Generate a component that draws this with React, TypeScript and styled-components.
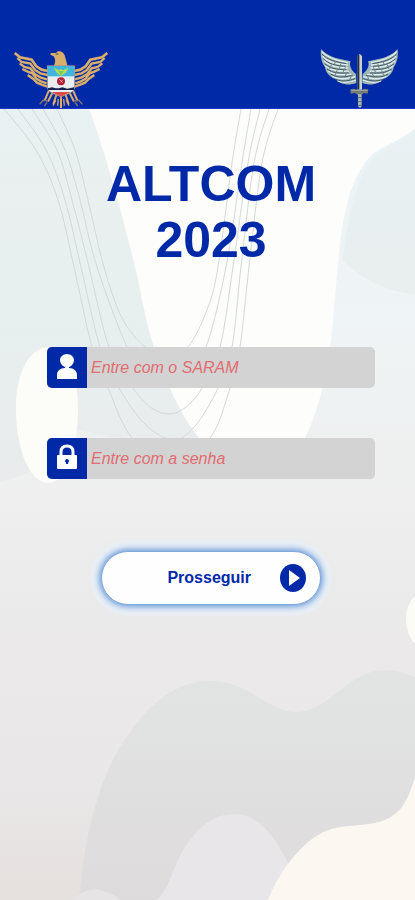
import React from "react";
import styled, { createGlobalStyle } from "styled-components";

const NAVY = "#0029a8";

const GlobalStyle = createGlobalStyle`
  *, *::before, *::after { box-sizing: border-box; }
  body {
    margin: 0;
    font-family: "Liberation Sans", Arial, sans-serif;
    background: #e8e4e3;
  }
`;

const Screen = styled.div`
  position: relative;
  isolation: isolate;
  display: flex;
  flex-direction: column;
  min-height: 100vh;
  overflow: hidden;
`;

const Backdrop = styled.svg`
  position: absolute;
  inset: 0;
  z-index: -1;
  width: 100%;
  height: 100%;
`;

const Header = styled.header`
  display: flex;
  justify-content: space-between;
  align-items: flex-end;
  padding: 48px 15px 0 13px;
  background: ${NAVY};
  border-bottom: 1px solid #1b35c4;
`;

const Emblem = styled.svg<{ $width: number; $height: number }>`
  display: block;
  width: ${(p) => p.$width}px;
  height: ${(p) => p.$height}px;
`;

const Content = styled.main`
  display: flex;
  flex-direction: column;
  align-items: center;
  padding: 47px 40px 48px 47px;
`;

const Title = styled.h1`
  margin: 0;
  max-width: 240px;
  color: ${NAVY};
  font-size: 50px;
  font-weight: 700;
  line-height: 56px;
  text-align: center;
`;

const Form = styled.form`
  display: flex;
  flex-direction: column;
  align-items: center;
  gap: 50px;
  width: 100%;
  margin-top: 79px;
`;

const Field = styled.div`
  display: flex;
  width: 100%;
  height: 41px;
  border-radius: 5px;
  overflow: hidden;
  background: #d3d3d3;
`;

const FieldLabel = styled.label`
  display: flex;
  flex: none;
  align-items: center;
  justify-content: center;
  width: 40px;
  padding-bottom: 2px;
  background: ${NAVY};
`;

const FieldInput = styled.input`
  flex: 1;
  min-width: 0;
  padding: 0 4px;
  border: 0;
  outline: 0;
  background: transparent;
  color: #d9534f;
  font: italic 16px/20px "Liberation Sans", Arial, sans-serif;

  &::placeholder {
    color: #e26c70;
    opacity: 1;
  }
`;

const SubmitButton = styled.button`
  display: flex;
  align-items: center;
  justify-content: flex-end;
  gap: 29px;
  width: 220px;
  height: 54px;
  margin-top: 22px;
  padding: 0 14px;
  border: 1px solid #82a9dc;
  border-radius: 27px;
  background: #fefefe;
  box-shadow: 0 0 5px 1px #6d9dd8, 0 0 8px 5px #c0d6ee, 0 0 3px 10px #f3f5f7;
  color: ${NAVY};
  font: 700 16px/20px "Liberation Sans", Arial, sans-serif;
  cursor: pointer;
`;

const PlayIcon = styled.svg`
  flex: none;
  width: 26px;
  height: 28px;
`;

type Point = [number, number];

const STRANDS: Point[][] = [
  [[4, 109], [36, 150], [58, 200], [74, 267], [92, 347], [108, 388], [132, 438], [170, 463], [210, 438], [230, 388], [240, 347], [249, 267], [262, 163], [278, 109]],
  [[18, 109], [46, 150], [65, 200], [81, 267], [100, 347], [119, 388], [145, 424], [173, 440], [195, 426], [218, 388], [232, 347], [241, 267], [254, 163], [269, 109]],
  [[32, 109], [57, 150], [72, 200], [89, 267], [109, 347], [133, 388], [150, 407], [169, 414], [186, 407], [202, 388], [220, 347], [233, 267], [248, 163], [260, 109]],
  [[43, 109], [65, 150], [80, 200], [97, 267], [127, 347], [145, 369], [166, 380], [187, 370], [206, 347], [226, 267], [242, 163], [251, 109]],
  [[57, 109], [75, 150], [88, 200], [104, 267], [122, 318], [145, 347], [168, 358], [188, 347], [207, 310], [218, 267], [232, 163], [241, 109]],
];

// Catmull-Rom spline through the points, written as cubic segments
function smoothPath(points: Point[]) {
  const at = (i: number) => points[Math.max(0, Math.min(points.length - 1, i))];
  let d = `M${at(0)[0]} ${at(0)[1]}`;
  for (let i = 0; i < points.length - 1; i++) {
    const [a, b, c, e] = [at(i - 1), at(i), at(i + 1), at(i + 2)];
    d += `C${b[0] + (c[0] - a[0]) / 6} ${b[1] + (c[1] - a[1]) / 6} ${c[0] - (e[0] - b[0]) / 6} ${c[1] - (e[1] - b[1]) / 6} ${c[0]} ${c[1]}`;
  }
  return d;
}

function BackgroundArt() {
  return (
    <Backdrop viewBox="0 0 415 900" preserveAspectRatio="xMidYMid slice" aria-hidden="true">
      <defs>
        <linearGradient id="base" x1="0" y1="0" x2="0" y2="1">
          <stop offset="0.12" stopColor="#e9f3f5" />
          <stop offset="0.35" stopColor="#eff4f6" />
          <stop offset="0.55" stopColor="#eeefee" />
          <stop offset="0.66" stopColor="#ebebeb" />
          <stop offset="0.72" stopColor="#ebe9ea" />
          <stop offset="0.87" stopColor="#e9e7e8" />
          <stop offset="1" stopColor="#e6e0de" />
        </linearGradient>
        <linearGradient id="mist" x1="0" y1="0" x2="0" y2="1">
          <stop offset="0" stopColor="#e8f2f3" />
          <stop offset="0.25" stopColor="#eaefef" />
          <stop offset="0.5" stopColor="#e7f0ef" />
          <stop offset="1" stopColor="#e9ebec" />
        </linearGradient>
        <linearGradient id="wave" x1="0" y1="0" x2="0" y2="1">
          <stop offset="0" stopColor="#e2e4e4" />
          <stop offset="1" stopColor="#dedbdc" />
        </linearGradient>
        <linearGradient id="corner" x1="0" y1="0" x2="0" y2="1">
          <stop offset="0" stopColor="#e8f1f3" />
          <stop offset="1" stopColor="#e9eeee" />
        </linearGradient>
      </defs>
      <rect width="415" height="900" fill="url(#base)" />
      <path d="M0 100H110L210 447C170 452 130 440 78 430C55 455 30 478 0 481Z" fill="url(#mist)" />
      <path d="M86 100C105 150 125 225 137 275C144 310 150 340 160 365C172 395 184 420 202 442C235 470 275 470 303 442C330 390 332 330 336 285C341 235 344 180 374 153C391 142 407 137 415 128V100Z" fill="#fdfdfc" />
      <path d="M415 131C405 141 390 145 380 151C354 172 349 220 342 260C364 280 386 292 415 294Z" fill="url(#corner)" />
      <path d="M48 347C27 349 15 376 16 413C17 451 30 482 48 483C67 483 78 448 78 410C78 371 67 347 48 347Z" fill="#fcfcf9" />
      <g fill="none" stroke="#d3d8d8" strokeWidth="1">
        {STRANDS.map((points, index) => (
          <path key={index} d={smoothPath(points)} />
        ))}
      </g>
      <path d="M415 596C403 607 403 631 415 644Z" fill="#fcfbf6" />
      <path d="M79 900C84 840 98 775 128 735C156 694 184 681 210 681C252 681 265 712 298 712C330 711 348 670 385 670C398 670 408 674 415 677V900Z" fill="url(#wave)" />
      <path d="M156 900C171 890 172 863 190 840C203 823 217 814 233 814C261 814 275 838 290 866L282 900Z" fill="#e8e6e8" />
      <path d="M74 900C84 886 104 886 120 900Z" fill="#e7e4e6" />
      <path d="M268 900C281 867 306 837 331 829C354 823 377 828 395 814C406 806 410 791 415 778V900Z" fill="#fcf7f1" />
    </Backdrop>
  );
}

function EagleEmblem() {
  const halfWing = (
    <g fill="none" stroke="#d9ae6b" strokeWidth="7" strokeLinejoin="miter">
      <path d="M45 42L61 55L96 62L110 82L126 92L144 96" strokeWidth="8" />
      <path d="M53 57L66 69L92 74L106 93L122 103L144 108" />
      <path d="M60 73L74 84L92 88L106 106L122 115L142 121" />
      <path d="M68 90L84 98L98 103L110 119L124 127L141 133" />
      <path d="M84 108L100 119L112 131L126 137L143 143" />
    </g>
  );
  return (
    <Emblem $width={96} $height={57} viewBox="40 36 288 171" role="img" aria-label="Brasão com águia">
      {halfWing}
      <g transform="translate(368 0) scale(-1 1)">{halfWing}</g>
      <path d="M161 82C169 69 167 60 162 52L152 47L154 42L169 42L172 38C184 34 195 42 197 56L204 82Z" fill="#d9ae6b" />
      <path d="M168 45H176" stroke="#3e3b55" strokeWidth="3" />
      <g fill="none" stroke="#d9ae6b" strokeWidth="6">
        <path d="M148 154L135 184M158 162L145 188M170 168L161 195M184 169V207M198 168L207 195M210 162L223 188M220 154L233 184" />
        <path d="M120 196L130 184L144 186M248 196L238 184L224 186M134 201L142 190M234 201L226 190" stroke="#8b7770" strokeWidth="4" />
        <path d="M168 184L160 200M200 184L208 200M176 180L174 200M192 180L194 200" strokeWidth="4" />
      </g>
      <path d="M143 80H225V145C225 160 202 166 184 174C166 166 143 160 143 145Z" fill="#e9edf0" stroke="#8f8276" strokeWidth="2" />
      <path d="M144 81H224V112H144Z" fill="#42b5df" />
      <path d="M162 86L178 94L184 90L190 94L207 86L197 102L184 111L172 102Z" fill="#b8df54" />
      <path d="M176 96H192L184 110Z" fill="#78c957" />
      <circle cx="184" cy="127" r="12" fill="#b21e37" />
      <path d="M179 121L189 131M190 122L181 131" stroke="#eb9ba4" strokeWidth="3" />
      <path d="M145 148L157 145L168 148H178L188 145L203 149L223 145V153H145Z" fill="#17204f" />
      <path d="M155 159H213L184 173Z" fill="#d94b46" />
    </Emblem>
  );
}

function WingedSwordEmblem() {
  const wing = (
    <g>
      <path d="M48 30C67 51 92 58 119 63L137 67C131 80 140 96 153 105L154 132C131 141 104 136 91 120C71 113 61 97 60 85C48 69 46 48 48 30Z" fill="#9eb6b8" />
      <path d="M51 37C66 57 96 65 129 71M53 51C68 70 94 75 128 78M56 65C72 81 98 86 129 87M61 80C78 96 103 96 132 97M69 96C87 109 110 108 140 106M82 112C104 123 123 120 151 113M98 126C119 134 136 130 153 123" fill="none" stroke="#e2eceb" strokeWidth="4" />
      <path d="M51 45C67 63 94 69 124 74M55 59C71 76 93 80 122 82M59 74C76 89 96 92 124 92M66 90C82 102 104 103 131 102M77 105C95 117 115 115 143 109M92 121C113 129 130 126 151 119" fill="none" stroke="#3e565f" strokeWidth="3" />
      <path d="M92 66L88 78M108 74L103 89M121 85L113 102M126 98L119 116M140 107L133 127M79 77L74 90M96 94L89 112" stroke="#688386" strokeWidth="3" />
    </g>
  );
  return (
    <Emblem $width={80} $height={60} viewBox="45 27 240 180" role="img" aria-label="Brasão com asas e espada">
      {wing}
      <g transform="translate(326 0) scale(-1 1)">{wing}</g>
      <path d="M157 51L164 44L171 51V152H157Z" fill="#c8d0cc" />
      <path d="M157 51L163 45V151H157Z" fill="#202f48" />
      <path d="M136 151L149 149L156 153H171L178 149L190 151L188 164L176 162L170 167H157L150 162L137 164Z" fill="#737c76" />
      <path d="M139 154H187" stroke="#a4aaa0" strokeWidth="3" />
      <path d="M159 166H170V202L165 207L159 202Z" fill="#aeb9b4" />
      <path d="M158 176H171M158 188H171M158 199H171" stroke="#596d78" strokeWidth="3" />
    </Emblem>
  );
}

function UserIcon() {
  return (
    <svg width="22" height="26" viewBox="0 0 22 26" aria-hidden="true">
      <path d="M11 0C15 0 18 3 18 6C18 9 16 12 13 13V14C18 14 21 17 21 21V25H1V21C1 17 4 14 9 14V13C6 12 4 9 4 6C4 3 7 0 11 0Z" fill="#fff" />
    </svg>
  );
}

function LockIcon() {
  return (
    <svg width="22" height="28" viewBox="0 0 22 28" aria-hidden="true">
      <path d="M5 12V8C5 4 7 2 11 2S17 4 17 8V12" fill="none" stroke="#fff" strokeWidth="3" />
      <rect x="1" y="11" width="20" height="14" rx="1" fill="#fff" />
      <path d="M11 15C12 15 13 16 13 17C13 18 12 18 12 20H10L10 18C9 18 9 18 9 17C9 16 10 15 11 15Z" fill={NAVY} />
    </svg>
  );
}

export default function App() {
  return (
    <Screen>
      <GlobalStyle />
      <BackgroundArt />
      <Header>
        <EagleEmblem />
        <WingedSwordEmblem />
      </Header>
      <Content>
        <Title>ALTCOM 2023</Title>
        <Form onSubmit={(event) => event.preventDefault()}>
          <Field>
            <FieldLabel htmlFor="saram" aria-label="SARAM">
              <UserIcon />
            </FieldLabel>
            <FieldInput id="saram" type="text" placeholder="Entre com o SARAM" />
          </Field>
          <Field>
            <FieldLabel htmlFor="senha" aria-label="Senha">
              <LockIcon />
            </FieldLabel>
            <FieldInput id="senha" type="password" placeholder="Entre com a senha" />
          </Field>
          <SubmitButton type="submit">
            Prosseguir
            <PlayIcon viewBox="0 0 26 28" aria-hidden="true">
              <ellipse cx="13" cy="14" rx="13" ry="14" fill={NAVY} />
              <path d="M9 6L20 14L9 22Z" fill="#fff" />
            </PlayIcon>
          </SubmitButton>
        </Form>
      </Content>
    </Screen>
  );
}
